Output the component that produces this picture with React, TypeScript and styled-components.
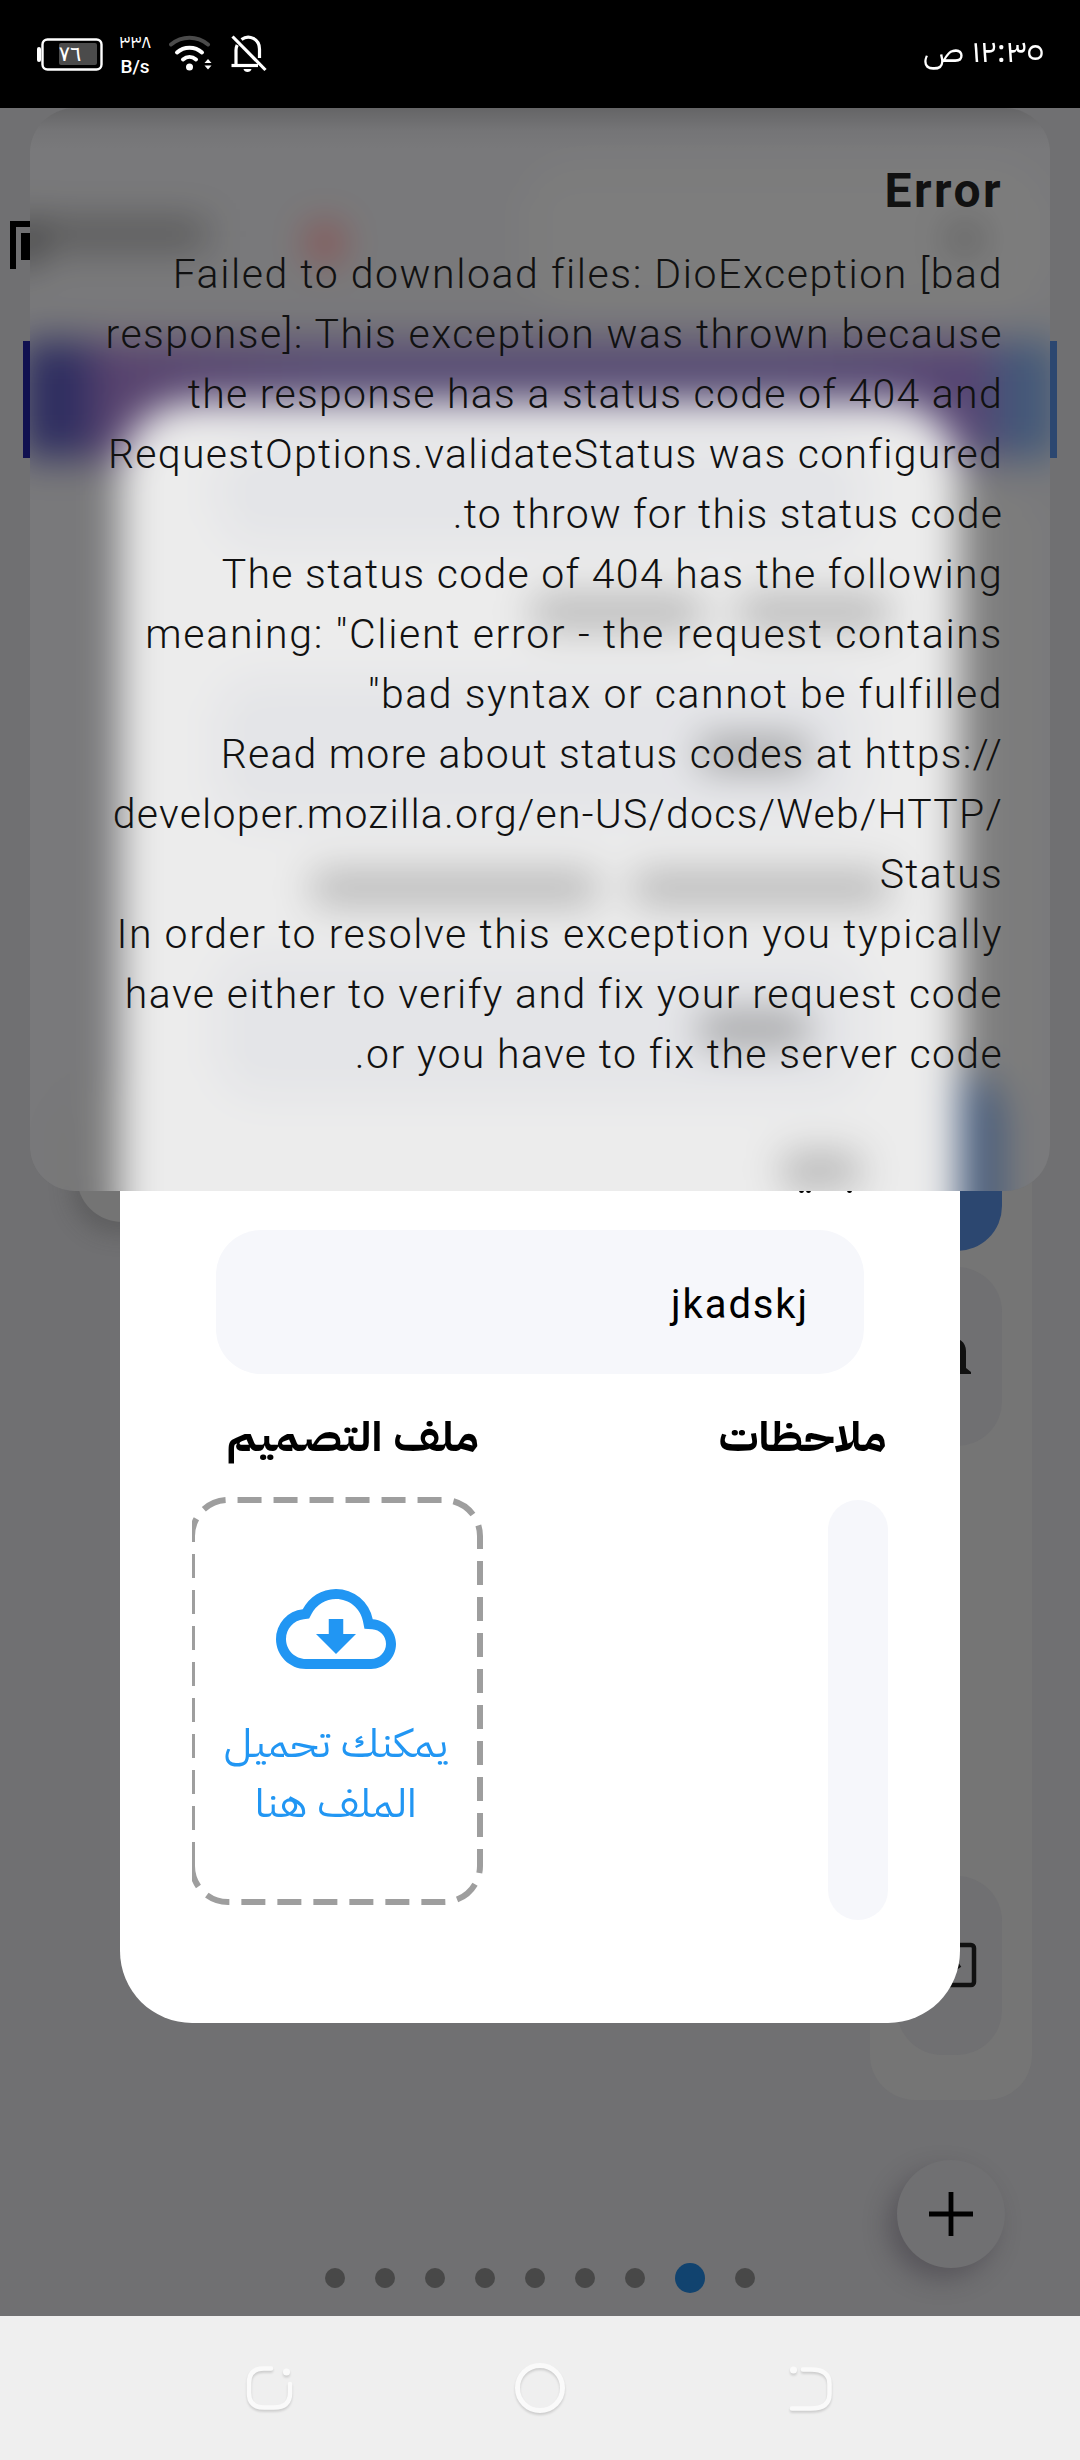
import React, { useLayoutEffect, useRef, useState } from "react";
import styled, { createGlobalStyle, css } from "styled-components";

const GlobalStyle = createGlobalStyle`
  *, *::before, *::after { box-sizing: border-box; }
  body { margin: 0; background: #000; }
`;

const latin = `Roboto, "Noto Sans", sans-serif`;
const arabic = `"IBM Plex Sans Arabic", "Noto Sans Arabic", "DejaVu Sans", sans-serif`;

/* ---------- text that fills a fixed measure ---------- */

const FitBox = styled.span<{ $width: number }>`
  display: flex;
  justify-content: flex-start;
  width: ${(p) => p.$width}px;
  white-space: nowrap;
`;
const FitInner = styled.span`
  display: block;
  flex: none;
  transform-origin: 100% 50%;
`;

function Fit({ width, scale, children }: { width: number; scale?: boolean; children: string }) {
  const ref = useRef<HTMLSpanElement>(null);
  const [style, setStyle] = useState<React.CSSProperties>({});
  useLayoutEffect(() => {
    const el = ref.current;
    if (!el) return;
    const natural = el.getBoundingClientRect().width;
    if (scale) setStyle({ transform: `scaleX(${width / natural})` });
    else setStyle({ letterSpacing: `${(width - natural) / (children.replace("\u200e", "").length - 1)}px` });
  }, []);
  return (
    <FitBox $width={width}>
      <FitInner ref={ref} style={style}>{children}</FitInner>
    </FitBox>
  );
}

/* ---------- frame ---------- */

const Phone = styled.div`
  width: 1080px;
  height: 2460px;
  display: grid;
  grid-template-rows: 108px 2208px 144px;
  overflow: hidden;
  direction: rtl;
`;

const StatusBar = styled.header`
  display: flex;
  direction: ltr;
  align-items: flex-start;
  justify-content: space-between;
  background: #000;
  color: #fff;
  padding: 0 36px;
`;
const StatusIcons = styled.div`
  display: flex;
  align-items: flex-start;
  padding-top: 34px;
`;
const Battery = styled.svg`display: block; margin-right: 16px;`;
const Speed = styled.div`
  display: flex;
  flex-direction: column;
  align-items: center;
  width: 30px;
  margin-right: 19px;
`;
const SpeedValue = styled.span`
  font: 18px/16px ${arabic};
  direction: rtl;
`;
const SpeedUnit = styled.span`
  font: 500 19px/22px ${latin};
  margin-top: 6px;
`;
const Clock = styled.div`
  direction: rtl;
  font: 31px/40px ${arabic};
  padding-top: 32px;
`;
const SmallIcon = styled.svg<{ $gap?: number }>`
  display: block;
  margin-right: ${(p) => p.$gap ?? 0}px;
`;

/* ---------- dimmed page under the dialog ---------- */

const Stage = styled.main`
  position: relative;
  background: #707072;
  overflow: hidden;
`;
const Page = styled.div`
  position: relative;
  display: flex;
  flex-direction: column;
  width: 1080px;
  height: 2208px;
`;
const TopBar = styled.div`
  display: flex;
  direction: ltr;
  align-items: center;
  height: 233px;
  padding: 40px 40px 0 10px;
`;
const BrandText = styled.div`
  width: 170px;
  height: 26px;
  margin-top: -22px;
  background: #404040;
`;
const RedDot = styled.div`
  width: 32px;
  height: 38px;
  margin: -4px 0 0 103px;
  border-radius: 50%;
  background: #8a3030;
`;
const SearchBox = styled.div`
  display: flex;
  align-items: center;
  justify-content: flex-end;
  flex: 1;
  height: 140px;
  margin: -12px 0 0 188px;
  padding-right: 58px;
  border-radius: 45px;
  background: #757575;
`;
const SearchGlyph = styled.div`
  width: 34px;
  height: 34px;
  border-radius: 50%;
  background: #4a4a4a;
`;
const Banner = styled.div`
  height: 117px;
  margin: 0 23px;
  background: linear-gradient(to right, #101050 0, #101050 48px, #472c62 84px, #47396a 300px, #47396a 760px, #452f68 960px, #2c4770 985px, #2c4770 100%);
`;
const Workspace = styled.div`
  display: flex;
  justify-content: space-between;
  align-items: flex-start;
  height: 1642px;
  padding: 30px 48px 0 77px;
`;
const Sidebar = styled.aside`
  display: flex;
  flex-direction: column;
  align-items: flex-start;
  width: 162px;
  height: 1612px;
  padding: 583px 30px 45px 0;
  border-radius: 45px;
  background: #757575;
`;
const SideItem = styled.div<{ $active?: boolean; $last?: boolean }>`
  display: flex;
  align-items: center;
  justify-content: flex-start;
  flex: none;
  width: 105px;
  height: ${(p) => (p.$active ? 180 : 179)}px;
  margin-bottom: ${(p) => (p.$last ? 0 : 16)}px;
  ${(p) => p.$last && css`margin-top: auto;`}
  border-radius: 45px;
  background: ${(p) => (p.$active ? "#2c4770" : "#707072")};
`;
const RoundCard = styled.div`
  width: 105px;
  height: 150px;
  margin-top: 584px;
  border-radius: 45px;
  background: #747474;
  box-shadow: -6px 12px 22px rgba(60, 60, 60, 0.32);
`;
const Pager = styled.div`
  display: flex;
  direction: ltr;
  justify-content: center;
  align-items: center;
  gap: 30px;
  height: 30px;
  margin-top: 163px;
`;
const PageDot = styled.span<{ $on?: boolean }>`
  width: ${(p) => (p.$on ? 30 : 20)}px;
  height: ${(p) => (p.$on ? 30 : 20)}px;
  border-radius: 50%;
  background: ${(p) => (p.$on ? "#11436f" : "#484848")};
`;
const AddButton = styled.div`
  position: absolute;
  left: 897px;
  bottom: 48px;
  display: grid;
  place-items: center;
  width: 108px;
  height: 108px;
  border-radius: 50%;
  background: #707072;
  box-shadow: -9px 11px 24px rgba(50, 45, 55, 0.38);
`;

/* ---------- dialog ---------- */

const Dialog = styled.section`
  position: absolute;
  left: 120px;
  top: 294px;
  display: flex;
  flex-direction: column;
  width: 840px;
  height: 1621px;
  padding: 38px 72px 0;
  border-radius: 72px;
  background: #fff;
`;
const Field = styled.div<{ $height?: number }>`
  display: flex;
  align-items: center;
  flex: none;
  height: ${(p) => p.$height ?? 144}px;
  margin: 0 24px;
  padding: 5px 55px 0 0;
  border-radius: 45px;
  background: #f6f7fb;
  font: 400 40px/60px ${latin};
  color: #000;
`;
const HiddenLabel = styled.div`
  display: flex;
  align-items: center;
  flex: none;
  gap: 36px;
  height: 132px;
`;
const Smudge = styled.span<{ $width: number; $strong?: boolean }>`
  width: ${(p) => p.$width}px;
  height: 34px;
  border-radius: 10px;
  background: rgba(0, 0, 0, ${(p) => (p.$strong ? 0.34 : 0.26)});
`;
const LabelTail = styled.div`
  display: flex;
  flex-direction: column;
  align-items: flex-start;
  flex: none;
  height: 132px;
  padding: 54px 28px 0 0;
`;
const Dots = styled.div`
  display: flex;
  gap: 2px;
  padding: 1px 8px 0 0;
`;
const Dot = styled.i<{ $gap?: number }>`
  width: 5px;
  height: 6px;
  margin-left: ${(p) => p.$gap ?? 0}px;
  border-radius: 50%;
  background: #000;
`;
const Columns = styled.div`
  display: flex;
  justify-content: space-between;
`;
const Column = styled.div<{ $width: number }>`
  display: flex;
  flex-direction: column;
  width: ${(p) => p.$width}px;
`;
const Label = styled.div<{ $inset: number }>`
  height: 126px;
  padding: 34px ${(p) => p.$inset}px 0 0;
  font: 700 41px/60px ${arabic};
  color: #000;
`;
const Notes = styled.div`
  width: 60px;
  height: 420px;
  border-radius: 30px;
  background: #f6f7fb;
`;
const DropZone = styled.div`
  position: relative;
  display: flex;
  flex-direction: column;
  align-items: center;
  height: 402px;
  padding: 69px 4px 0 0;
  color: #2196f3;
  font: 400 39px/60px ${arabic};
`;
const Outline = styled.svg`
  position: absolute;
  left: 0;
  top: -3px;
`;
const CloudIcon = styled.svg`display: block; margin: 0 0 25px;`;

/* ---------- error snackbar ---------- */

const Snackbar = styled.section`
  position: absolute;
  left: 30px;
  top: 0;
  display: flex;
  flex-direction: column;
  width: 1020px;
  height: 1083px;
  padding: 53px 47px 0;
  border-radius: 45px;
  overflow: hidden;
  color: #111;
`;
/* A blurred copy of the page lies behind the card; it reaches past every edge so the blur never fades out. */
const Frost = styled.div`
  position: absolute;
  left: -130px;
  top: -100px;
  width: 1280px;
  height: 1400px;
  padding: 100px;
  overflow: hidden;
  background: #707072;
  filter: blur(19px);
`;
const Tint = styled.div`
  position: absolute;
  inset: 0;
  background:
    linear-gradient(rgba(0, 0, 0, 0.17), rgba(0, 0, 0, 0.04) 22px, rgba(0, 0, 0, 0) 42px),
    rgba(158, 158, 158, 0.2);
`;
const SnackTitle = styled.h1`
  position: relative;
  margin: 0 0 23px;
  font: 700 48px/60px ${latin};
`;
const SnackText = styled.div`
  position: relative;
  font: 300 41px/60px ${latin};
`;

const NavBar = styled.nav`
  display: flex;
  direction: ltr;
  justify-content: center;
  align-items: flex-start;
  gap: 216px;
  padding-top: 44px;
  background: #efefef;
`;
const NavIcon = styled.svg`
  filter: drop-shadow(0 2px 1px rgba(0, 0, 0, 0.14));
`;

const errorLines: [string, number][] = [
  ["Failed to download files: DioException [bad", 828],
  ["response]: This exception was thrown because", 896],
  ["the response has a status code of 404 and", 814],
  ["RequestOptions.validateStatus was configured", 893],
  ["to throw for this status code.", 549],
  ["The status code of 404 has the following", 780],
  ["meaning: \"Client error - the request contains", 856],
  ["bad syntax or cannot be fulfilled\"", 633],
  ["Read more about status codes at https://\u200e", 781],
  ["developer.mozilla.org/en-US/docs/Web/HTTP/\u200e", 889],
  ["Status", 122],
  ["In order to resolve this exception you typically", 885],
  ["have either to verify and fix your request code", 876],
  ["or you have to fix the server code.", 646],
];

function PageContent() {
  return (
    <>
      <TopBar>
        <svg width="26" height="48" viewBox="0 0 26 48">
          <path d="M0 0H26V6H6V48H0ZM11 12H26V39H11Z" fill="#000" />
        </svg>
        <BrandText />
        <RedDot />
        <SearchBox><SearchGlyph /></SearchBox>
      </TopBar>
      <Banner />
      <Workspace>
        <Sidebar>
          <SideItem $active />
          <SideItem>
            <svg width="105" height="179" viewBox="0 0 105 179">
              <path d="M40 107V82C40 66 69 66 69 84V101L74 105V107Z" fill="#111" />
            </svg>
          </SideItem>
          <SideItem $last>
            <svg width="105" height="179" viewBox="0 0 105 179" fill="none" stroke="#111" strokeWidth="4.500">
              <rect x="35" y="69" width="42" height="40" rx="3" />
              <path d="M48 90L54 95L63 89" />
            </svg>
          </SideItem>
        </Sidebar>
        <RoundCard />
      </Workspace>
    </>
  );
}

function UpperForm() {
  return (
    <>
      <Field $height={106} />
      <HiddenLabel><Smudge $width={150} /><Smudge $width={170} /></HiddenLabel>
      <Field><Smudge $width={110} $strong /></Field>
      <HiddenLabel><Smudge $width={255} /><Smudge $width={285} /></HiddenLabel>
      <Field><Smudge $width={110} $strong /></Field>
      <LabelTail>
        <Smudge $width={78} />
        <Dots><Dot $gap={34} /><Dot /><Dot /></Dots>
      </LabelTail>
    </>
  );
}

export default function App() {
  return (
    <>
      <GlobalStyle />
      <Phone>
        <StatusBar>
          <StatusIcons>
            <Battery width="68" height="40" viewBox="0 0 68 40">
              <rect x="1" y="13" width="4" height="15" rx="2" fill="#fff" />
              <rect x="6.500" y="5.500" width="59" height="30" rx="5" fill="none" stroke="#fff" strokeWidth="2.400" />
              <rect x="23" y="9" width="38" height="22" rx="2" fill="#4b4b4b" />
              <text x="34" y="27" textAnchor="middle" fill="#fff" fontSize="21" fontFamily="DejaVu Sans">٧٦</text>
            </Battery>
            <Speed>
              <SpeedValue>٣٣٨</SpeedValue>
              <SpeedUnit>B/s</SpeedUnit>
            </Speed>
            <SmallIcon $gap={19} width="43" height="40" viewBox="0 0 43 40" fill="none" stroke="#fff" strokeWidth="4" strokeLinecap="round">
              <path d="M2 10.500C13 1.500 28 1.500 39 10.500" stroke="#4b4b4b" />
              <path d="M8 18.500C15 12 26 12 33 18.500" />
              <path d="M14 25.500C18 22 23 22 27 25.500" />
              <circle cx="20.500" cy="33" r="3.500" fill="#fff" stroke="none" />
              <path d="M35.500 29L39 25L42.500 29ZM35.500 31.500L39 35.500L42.500 31.500Z" fill="#fff" stroke="none" />
            </SmallIcon>
            <SmallIcon width="36" height="40" viewBox="0 0 36 40" fill="none" stroke="#fff" strokeWidth="3.200">
              <path d="M1.500 2.500L34.500 36" />
              <path d="M5 31.500V16C5 14 5.500 12.500 6.200 11M10.500 5.500C18 0 28.500 5 28.500 15V24" />
              <path d="M0.500 31.500H27" />
              <path d="M12.500 35H20.500C20 39 13 39 12.500 35Z" fill="#fff" stroke="none" />
            </SmallIcon>
          </StatusIcons>
          <Clock><Fit width={121} scale>١٢:٣٥ ص</Fit></Clock>
        </StatusBar>

        <Stage>
          <Page>
            <PageContent />
            <Pager>
              {[0, 1, 2, 3, 4, 5, 6, 7, 8].map((i) => <PageDot key={i} $on={i === 7} />)}
            </Pager>
            <AddButton>
              <svg width="44" height="44" viewBox="0 0 44 44">
                <path d="M22 0V44M0 22H44" stroke="#000" strokeWidth="4.800" />
              </svg>
            </AddButton>
          </Page>

          <Dialog>
            <UpperForm />
            <Field><Fit width={136}>jkadskj</Fit></Field>
            <Columns>
              <Column $width={200}>
                <Label $inset={1}><Fit width={168} scale>ملاحظات</Fit></Label>
                <Notes />
              </Column>
              <Column $width={291}>
                <Label $inset={4}><Fit width={252} scale>ملف التصميم</Fit></Label>
                <DropZone>
                  <Outline width="291" height="408" viewBox="0 -3 291 408" fill="none" stroke="#9e9e9e" strokeWidth="6">
                    <path d="M0 366V36A36 36 0 0 1 36 0H252A36 36 0 0 1 288 36V366A36 36 0 0 1 252 402H36A36 36 0 0 1 0 366Z" strokeDasharray="24 12" />
                  </Outline>
                  <CloudIcon width="120" height="120" viewBox="0 0 24 24" fill="currentColor">
                    <path d="M19.35 10.04A7.49 7.49 0 0 0 12 4C9.11 4 6.6 5.64 5.35 8.04A5.994 5.994 0 0 0 0 14c0 3.31 2.69 6 6 6h13c2.760 0 5-2.240 5-5 0-2.640-2.050-4.780-4.650-4.960zM19 18H6c-2.210 0-4-1.790-4-4 0-2.050 1.530-3.760 3.560-3.970l1.070-.110.5-.950A5.469 5.469 0 0 1 12 6c2.620 0 4.880 1.860 5.390 4.430l.3 1.500 1.530.110A2.980 2.980 0 0 1 22 15c0 1.650-1.350 3-3 3zm-5.550-8h-2.900v3H8l4 4 4-4h-2.550z" />
                  </CloudIcon>
                  <Fit width={224} scale>يمكنك تحميل</Fit>
                  <Fit width={162} scale>الملف هنا</Fit>
                </DropZone>
              </Column>
            </Columns>
          </Dialog>

          <Snackbar>
            <Frost aria-hidden>
              <Page>
                <PageContent />
                <Dialog><UpperForm /></Dialog>
              </Page>
            </Frost>
            <Tint />
            <SnackTitle><Fit width={116}>Error</Fit></SnackTitle>
            <SnackText>
              {errorLines.map(([text, width]) => <Fit key={text} width={width}>{text}</Fit>)}
            </SnackText>
          </Snackbar>
        </Stage>

        <NavBar>
          <NavIcon width="54" height="60" viewBox="0 0 54 60" fill="none" stroke="#fafafa" strokeWidth="4.500" strokeLinecap="round">
            <path d="M28 8.500H21Q6 8.500 6 23V33Q6 47.500 21 47.500H31Q47 47.500 47 33V24" />
            <circle cx="43.500" cy="12" r="3.500" fill="#fafafa" stroke="none" />
          </NavIcon>
          <NavIcon width="54" height="60" viewBox="0 0 54 60" fill="none" stroke="#fafafa" strokeWidth="5">
            <circle cx="27" cy="28" r="22.500" />
          </NavIcon>
          <NavIcon width="54" height="60" viewBox="0 0 54 60" fill="none" stroke="#fafafa" strokeWidth="4.500" strokeLinecap="round">
            <path d="M20 9.500H28Q46.500 9.500 46.500 24V34Q46.500 48.500 28 48.500H9" />
            <circle cx="10.500" cy="10" r="3.500" fill="#fafafa" stroke="none" />
          </NavIcon>
        </NavBar>
      </Phone>
    </>
  );
}
